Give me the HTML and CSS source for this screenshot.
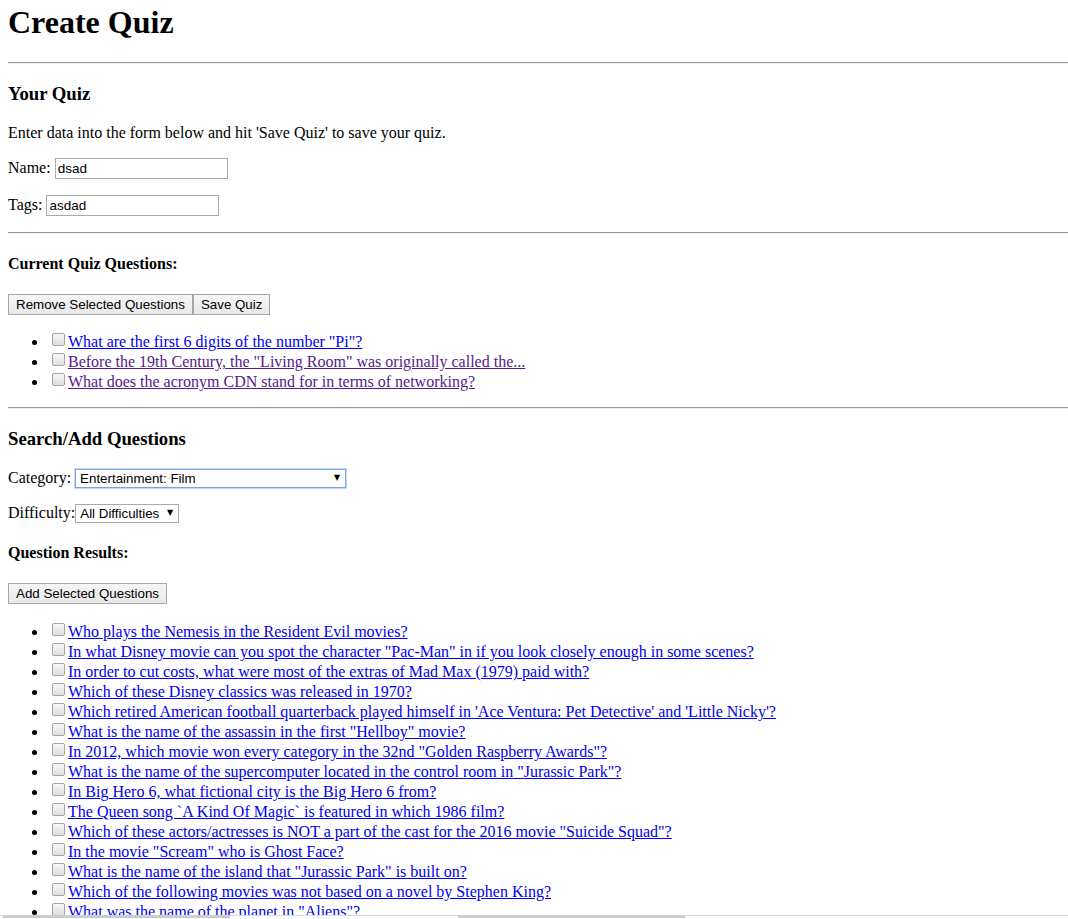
FILE: index.html
```html
<!DOCTYPE html>
<html>
<head>
<meta charset="utf-8">
<title>Create Quiz</title>
<link rel="stylesheet" href="styles.css">
</head>
<body>
<h1 class="title">Create Quiz</h1>
<hr class="rule">
<h3 class="section">Your Quiz</h3>
<p class="para">Enter data into the form below and hit 'Save Quiz' to save your quiz.</p>
<p class="para">Name: <input class="field field-name" type="text" value="dsad"></p>
<p class="para">Tags: <input class="field field-tags" type="text" value="asdad"></p>
<hr class="rule">
<h4 class="subsection">Current Quiz Questions:</h4>
<div class="buttons"><button class="btn">Remove Selected Questions</button><button class="btn">Save Quiz</button></div>
<ul class="qlist qlist-current">
<li class="qitem"><input class="check" type="checkbox"><a class="qlink" href="#">What are the first 6 digits of the number "Pi"?</a></li>
<li class="qitem"><input class="check" type="checkbox"><a class="qlink visited" href="#">Before the 19th Century, the "Living Room" was originally called the...</a></li>
<li class="qitem"><input class="check" type="checkbox"><a class="qlink visited" href="#">What does the acronym CDN stand for in terms of networking?</a></li>
</ul>
<hr class="rule">
<h3 class="section">Search/Add Questions</h3>
<p class="para">Category: <span class="select-wrap"><select class="select select-cat"><option>Entertainment: Film</option></select></span></p>
<p class="para">Difficulty:<span class="select-wrap"><select class="select select-diff"><option>All Difficulties</option></select></span></p>
<h4 class="subsection">Question Results:</h4>
<div class="buttons"><button class="btn">Add Selected Questions</button></div>
<ul class="qlist qlist-results">
<li class="qitem"><input class="check" type="checkbox"><a class="qlink" href="#">Who plays the Nemesis in the Resident Evil movies?</a></li>
<li class="qitem"><input class="check" type="checkbox"><a class="qlink" href="#">In what Disney movie can you spot the character "Pac-Man" in if you look closely enough in some scenes?</a></li>
<li class="qitem"><input class="check" type="checkbox"><a class="qlink" href="#">In order to cut costs, what were most of the extras of Mad Max (1979) paid with?</a></li>
<li class="qitem"><input class="check" type="checkbox"><a class="qlink" href="#">Which of these Disney classics was released in 1970?</a></li>
<li class="qitem"><input class="check" type="checkbox"><a class="qlink" href="#">Which retired American football quarterback played himself in 'Ace Ventura: Pet Detective' and 'Little Nicky'?</a></li>
<li class="qitem"><input class="check" type="checkbox"><a class="qlink" href="#">What is the name of the assassin in the first "Hellboy" movie?</a></li>
<li class="qitem"><input class="check" type="checkbox"><a class="qlink" href="#">In 2012, which movie won every category in the 32nd "Golden Raspberry Awards"?</a></li>
<li class="qitem"><input class="check" type="checkbox"><a class="qlink" href="#">What is the name of the supercomputer located in the control room in "Jurassic Park"?</a></li>
<li class="qitem"><input class="check" type="checkbox"><a class="qlink" href="#">In Big Hero 6, what fictional city is the Big Hero 6 from?</a></li>
<li class="qitem"><input class="check" type="checkbox"><a class="qlink" href="#">The Queen song `A Kind Of Magic` is featured in which 1986 film?</a></li>
<li class="qitem"><input class="check" type="checkbox"><a class="qlink" href="#">Which of these actors/actresses is NOT a part of the cast for the 2016 movie "Suicide Squad"?</a></li>
<li class="qitem"><input class="check" type="checkbox"><a class="qlink" href="#">In the movie "Scream" who is Ghost Face?</a></li>
<li class="qitem"><input class="check" type="checkbox"><a class="qlink" href="#">What is the name of the island that "Jurassic Park" is built on?</a></li>
<li class="qitem"><input class="check" type="checkbox"><a class="qlink" href="#">Which of the following movies was not based on a novel by Stephen King?</a></li>
<li class="qitem"><input class="check" type="checkbox"><a class="qlink" href="#">What was the name of the planet in "Aliens"?</a></li>
</ul>
<div class="bottom-bar"><span class="seg seg-a"></span><span class="seg seg-b"></span></div>
</body>
</html>
```
FILE: styles.css
```css
html {
  overflow: hidden;
}
body {
  margin: 0 0 0 8px;
  font-family: "Liberation Serif", "Times New Roman", serif;
  font-size: 16px;
  color: #000;
  background: #fff;
}
.title {
  font-size: 32px;
  font-weight: bold;
  margin: 4px 0 21.44px;
}
.rule {
  margin: 8px 0;
  border: 0;
  border-top: 1px solid #9a9a9a;
  border-bottom: 1px solid #eeeeee;
  height: 0;
}
.section {
  font-size: 18.72px;
  font-weight: bold;
  margin: 18.72px 0;
}
.subsection {
  font-size: 16px;
  font-weight: bold;
  margin: 21.28px 0;
}
.para {
  margin: 16px 0;
}
.field {
  font-family: "Liberation Sans", Arial, sans-serif;
  font-size: 13.5px;
  border: 1px solid #a9a9a9;
  padding: 1px 2px;
  margin: 0;
  height: 17px;
  width: 167px;
  color: #000;
  background: #fff;
  outline: none;
  vertical-align: baseline;
}
.buttons {
  display: flex;
}
.btn {
  font-family: "Liberation Sans", Arial, sans-serif;
  font-size: 13.33px;
  color: #000;
  background: linear-gradient(#f6f6f6, #e8e8e8);
  border: 1px solid #a6a6a6;
  border-radius: 0;
  padding: 1px 7px;
  height: 21px;
  margin: 0;
}
.qlist {
  margin: 16px 0;
  padding-left: 40px;
  list-style: disc;
}
.qlist-current {
  margin: 17px 0 15px;
}
.qlist-results {
  margin-top: 18px;
}
.qitem {
  line-height: 20px;
}
.check {
  appearance: none;
  -webkit-appearance: none;
  width: 13px;
  height: 13px;
  margin: 0 3px 0 4px;
  border: 1px solid #a4a4a4;
  border-radius: 2px;
  background: linear-gradient(#f8f8f8, #dedede);
  box-sizing: border-box;
  vertical-align: 1px;
}
.qlink {
  color: #0000ee;
  text-decoration: underline;
}
.qlink.visited {
  color: #551a8b;
}
.select-wrap {
  position: relative;
  display: inline-block;
}
.select-wrap::after {
  content: "\25BC";
  position: absolute;
  right: 6px;
  top: 4px;
  font-family: "DejaVu Sans", sans-serif;
  font-size: 8px;
  color: #000;
  pointer-events: none;
}
.select {
  appearance: none;
  -webkit-appearance: none;
  font-family: "Liberation Sans", Arial, sans-serif;
  font-size: 13.33px;
  color: #000;
  background: #fff;
  border: 1px solid #a9a9a9;
  border-radius: 0;
  padding: 0 4px;
  height: 19px;
  margin: 0;
}
.select-cat {
  width: 271px;
  border-color: #7ea2e8;
  box-shadow: 0 0 0 1px #c9d8f5;
}
.select-diff {
  width: 104px;
}
.bottom-bar {
  position: fixed;
  left: 0;
  right: 0;
  bottom: 0;
  height: 3px;
  border-top: 1px solid #dcdce0;
  background: #fff;
}
.seg {
  position: absolute;
  top: -1px;
  height: 3px;
  background: #cdcdcd;
}
.seg-a {
  left: 3px;
  width: 227px;
}
.seg-b {
  left: 458px;
  width: 227px;
}
```
